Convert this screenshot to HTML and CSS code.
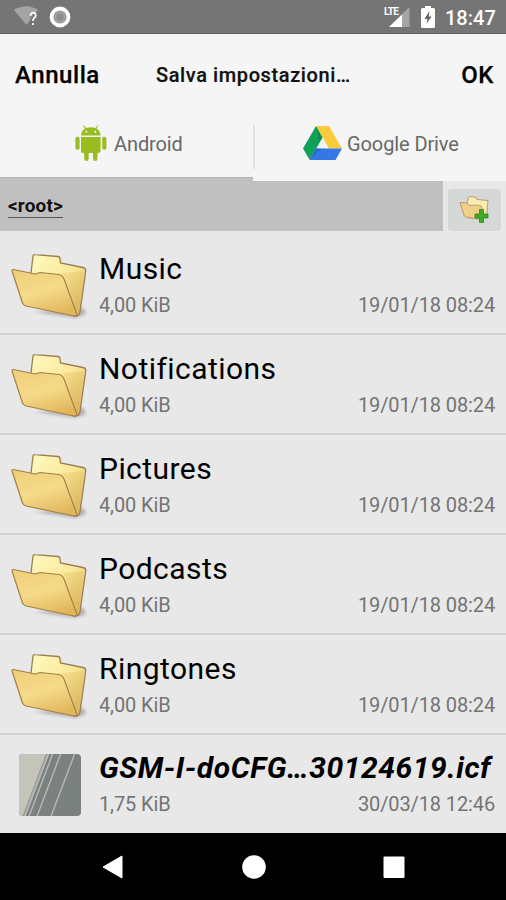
FILE: index.html
```html
<!DOCTYPE html>
<html lang="it">
<head>
<meta charset="utf-8">
<title>Salva impostazioni</title>
<link rel="stylesheet" href="styles.css">
</head>
<body>
<svg class="defs" width="0" height="0" aria-hidden="true">
  <defs>
    <linearGradient id="back" x1="0" y1="0" x2="1" y2="1"><stop offset="0" stop-color="#fff9c0"/><stop offset=".5" stop-color="#fae999"/><stop offset="1" stop-color="#d3aa50"/></linearGradient>
    <linearGradient id="front" x1="0.2" y1="0" x2=".6" y2="1"><stop offset="0" stop-color="#f0d07a"/><stop offset=".5" stop-color="#f5da8a"/><stop offset="1" stop-color="#e2b65b"/></linearGradient>
    <filter id="soft" x="-20%" y="-20%" width="140%" height="150%"><feGaussianBlur stdDeviation="1.5"/></filter>
    <symbol id="folder" viewBox="0 0 80 70">
      <path d="M24 61 66 67 76 63 74 57Z" fill="#777" opacity=".45" filter="url(#soft)"/>
      <path d="M21 22 23 5Q23.300 3.500 25 3.700L48 5.500Q50 5.700 50 8L50.500 12 73 16.500Q76 17 75.700 20L70 61Q69.500 65 65 65L28 54Z" fill="url(#back)" stroke="#9c7d52" stroke-width="1.300"/>
      <path d="M53 22 74 20 68 61Z" fill="#d5a84a" opacity=".22"/>
      <path d="M3.500 18.500Q1.500 18.300 2.200 20.500L12.500 52Q13.300 54.300 16 55L64 65Q67.500 65.500 66.500 62L54 28Q52.500 24 49 23.500L30 21.500 25 23Z" fill="url(#front)" stroke="#a28048" stroke-width="1.200" stroke-linejoin="round"/>
    </symbol>
  </defs>
</svg>
<div class="screen">
  <header class="status">
    <svg class="wifi" width="26" height="22" viewBox="0 0 26 22"><path d="M0 4Q12 -3.500 24 4L12.500 19Z" fill="#a4a4a4"/><path d="M16 8H24V21H16Z" fill="#757575" opacity=".6"/><path d="M16.500 10Q16.800 6.800 19.300 6.800Q22 6.900 21.800 9.500Q21.600 11 20 12.200Q19 13 19 15M19 17V19" fill="none" stroke="#f2f2f2" stroke-width="1.900"/></svg>
    <svg class="record" width="22" height="22" viewBox="0 0 22 22"><circle cx="11" cy="11" r="8.500" fill="#a0a0a0" stroke="#fff" stroke-width="3.800"/><circle cx="11" cy="11" r="3.600" fill="#8c8c8c"/></svg>
    <div class="signal"><span class="lte">LTE</span><svg width="21" height="20" viewBox="0 0 21 20"><path d="M20.500 0V20H0Z" fill="#a5a5a5"/><path d="M13 7.500V20H0Z" fill="#fff"/></svg></div>
    <svg class="battery" width="14" height="22" viewBox="0 0 14 22"><path d="M4 0H10V2H12.500Q14 2 14 3.500V20.500Q14 22 12.500 22H1.500Q0 22 0 20.500V3.500Q0 2 1.500 2H4Z" fill="#fff"/><path d="M8.500 5 3.500 13H6.500L5.500 18 10.500 10.500H7.800Z" fill="#666"/></svg>
    <time class="clock">18:47</time>
  </header>
  <div class="titlebar"><span class="cancel">Annulla</span><span class="title">Salva impostazioni…</span><span class="ok">OK</span></div>
  <nav class="tabs">
    <div class="tab active">
      <svg class="robot" width="32" height="37" viewBox="0 0 32 37"><g fill="#99bd20"><path d="M6 10.500Q6.500 2.500 15.800 2.300Q25 2.500 25.600 10.500Z"/><path d="M6 12H25.600V26Q25.600 28 23.500 28H22.500V33.500Q22.500 36 20.200 36Q18 36 18 33.500V28H13.700V33.500Q13.700 36 11.500 36Q9.200 36 9.200 33.500V28H8Q6 28 6 26Z"/><rect x=".4" y="11.700" width="4.200" height="13" rx="2"/><rect x="27.200" y="11.700" width="4.200" height="13" rx="2"/></g><path d="M8.500.5 11 4M23 .5 20.500 4" stroke="#99bd20" stroke-width="1.100"/><circle cx="11.300" cy="6.800" r="1" fill="#fff"/><circle cx="20.300" cy="6.800" r="1" fill="#fff"/></svg>
      <span class="android">Android</span>
    </div>
    <div class="tab drive">
      <svg width="39" height="35" viewBox="0 0 39 35"><path d="M13 0 0 22.500 6.700 34 19.500 11.500Z" fill="#11a05a"/><path d="M13 0H26L39 22.500H26Z" fill="#fbcb3c"/><path d="M13 22.500H39L32.500 34H6.700Z" fill="#3477e5"/><path d="M6.700 34 13 22.500H18Z" fill="#205fc4" opacity=".6"/><path d="M13 0 19.500 11.500 16.500 16Z" fill="#087e42" opacity=".6"/></svg>
      <span class="google">Google Drive</span>
    </div>
  </nav>
  <div class="pathbar">
    <div class="path"><span>&lt;root&gt;</span></div>
    <div class="newfolder"><svg width="34" height="30" viewBox="0 0 34 30"><path d="M9 9 10.500 2.500Q11 1.500 12 1.700L18 2.200 19 4.500 30 5.500 28.500 22 10 23Z" fill="#faecb4" stroke="#a98a5a" stroke-width=".8"/><path d="M2 7.500 6 20Q6.500 21.500 8 22L25 25 27 22 23 11 18 10 11 10.500 9 8Z" fill="#f0cf86" stroke="#b18c50" stroke-width=".8"/><path d="M21.500 14.500H25.500V19H30V23H25.500V27.500H21.500V23H17V19H21.500Z" fill="#3dab25" stroke="#23851a" stroke-width=".7"/></svg></div>
  </div>
  <main class="list">
    <div class="row"><svg class="icon"><use href="#folder"/></svg><div class="info"><div class="name music">Music</div><div class="meta"><span>4,00 KiB</span><span class="date">19/01/18 08:24</span></div></div></div>
    <div class="row"><svg class="icon"><use href="#folder"/></svg><div class="info"><div class="name">Notifications</div><div class="meta"><span>4,00 KiB</span><span class="date">19/01/18 08:24</span></div></div></div>
    <div class="row"><svg class="icon"><use href="#folder"/></svg><div class="info"><div class="name">Pictures</div><div class="meta"><span>4,00 KiB</span><span class="date">19/01/18 08:24</span></div></div></div>
    <div class="row"><svg class="icon"><use href="#folder"/></svg><div class="info"><div class="name">Podcasts</div><div class="meta"><span>4,00 KiB</span><span class="date">19/01/18 08:24</span></div></div></div>
    <div class="row"><svg class="icon"><use href="#folder"/></svg><div class="info"><div class="name">Ringtones</div><div class="meta"><span>4,00 KiB</span><span class="date">19/01/18 08:24</span></div></div></div>
    <div class="row file"><svg class="icon" viewBox="0 0 80 70"><defs><clipPath id="tile"><rect x="9" y="3" width="62" height="62" rx="4"/></clipPath></defs><g clip-path="url(#tile)"><path d="M9 3H71V66H9Z" fill="#7b817e"/><path d="M9 3H38L14 66H9Z" fill="#c5c4bb"/><path d="M39 2 14 68M43 2 18 68M51 2 26 68M65 2 40 68" stroke="#b7bab6" stroke-width="1.400"/><path d="M37 2 12 68" stroke="#868b87" stroke-width="1"/></g></svg><div class="info"><div class="name filename">GSM-I-doCFG…30124619.icf</div><div class="meta"><span>1,75 KiB</span><span class="date">30/03/18 12:46</span></div></div></div>
  </main>
  <footer class="navbar">
    <svg width="24" height="26" viewBox="0 0 24 26"><path d="M21 2V24L2 13Z" fill="#fff" stroke="#fff" stroke-linejoin="round"/></svg>
    <svg width="24" height="26" viewBox="0 0 24 26"><circle cx="12" cy="13" r="11.800" fill="#fff"/></svg>
    <svg width="24" height="26" viewBox="0 0 24 26"><rect x="1.500" y="2.500" width="21" height="21.500" rx="1" fill="#fff"/></svg>
  </footer>
</div>
</body>
</html>
```
FILE: styles.css
```css
* { box-sizing: border-box; }
body { margin: 0; font-family: Roboto, "Liberation Sans", sans-serif; color: #111; }
svg { display: block; flex: none; }
.defs { position: absolute; }
.screen { width: 506px; height: 900px; background: #e8e8e8; overflow: hidden; white-space: nowrap; }
.status { height: 34px; background: #757575; border-bottom: 1px solid #606060; display: flex; align-items: center; padding: 1px 11px 0 14px; }
.record { margin-left: 9px; }
.signal { display: flex; margin-left: auto; width: 26px; height: 20px; }
.signal svg { margin-left: -11px; }
.lte { width: 16px; flex: none; font-size: 10px; line-height: 9px; font-weight: 700; color: #fff; letter-spacing: -.6px; z-index: 1; }
.battery { margin-left: 11px; }
.clock { margin-left: 10px; padding-top: 2px; color: #fff; font-size: 20px; line-height: 24px; font-weight: 500; width: 50px; }
.titlebar { height: 81px; background: #f5f5f5; display: grid; grid-template-columns: 141px 1fr auto; align-items: center; padding: 0 12px 0 15px; font-weight: 500; }
.cancel, .ok { font-size: 24px; color: #000; letter-spacing: .55px; -webkit-text-stroke: .25px; }
.title { font-size: 20px; letter-spacing: .6px; -webkit-text-stroke: .2px; }
.tabs { height: 66px; background: #f5f5f5; display: grid; grid-template-columns: 253px 253px; }
.tab { display: flex; align-items: center; padding-bottom: 9px; font-size: 20px; color: #686868; letter-spacing: -.1px; }
.active { padding-left: 75px; border-bottom: 3px solid #c0c0c0; padding-bottom: 6px; background: linear-gradient(#b4b4b4, #b4b4b4) 0 100% / 100% 1px no-repeat; }
.active span { margin-left: 7px; }
.drive { padding-left: 50px; background: linear-gradient(#e2e2e2, #e2e2e2) 0 10px / 2px 44px no-repeat; }
.drive span { margin-left: 5px; }
.pathbar { height: 50px; display: flex; }
.path { width: 443px; background: #c0c0c0; padding: 13px 8px; font-size: 19px; line-height: 24px; font-weight: 700; }
.path span { border-bottom: 1px solid #555; line-height: 22px; display: inline-block; letter-spacing: .15px; }
.newfolder { width: 53px; height: 42px; margin: 8px 0 0 5px; border-radius: 3px; background: #d6d8d8; display: flex; align-items: center; justify-content: center; }
.list { padding-top: 4px; }
.row { height: 100px; border-bottom: 2px solid #d2d2d2; display: flex; padding: 16px 11px 0 10px; }
.file { height: 98px; border-bottom: 0; }
.icon { width: 80px; height: 70px; }
.info { flex: 1; margin-left: 9px; min-width: 0; }
.name { font-size: 30px; line-height: 36px; color: #000; letter-spacing: .45px; }
.filename { font-weight: 700; font-style: italic; letter-spacing: .53px; margin-top: -1px; }
.meta { display: flex; justify-content: space-between; font-size: 20px; line-height: 24px; margin-top: 6px; color: #747474; letter-spacing: -.12px; }
.navbar { height: 67px; background: #000; display: flex; justify-content: space-between; align-items: center; padding: 0 100px 0 101px; }
```
